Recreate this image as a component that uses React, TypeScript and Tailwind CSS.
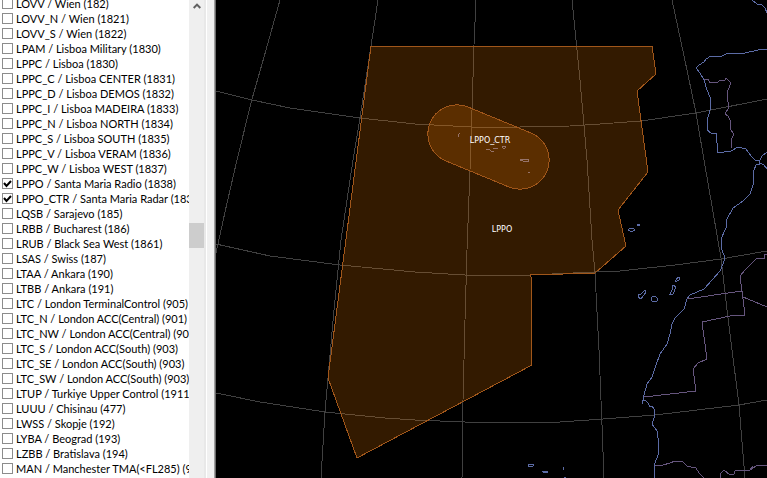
import React, { useState } from "react";

interface Sector {
  label: string;
  active?: boolean;
}

const sectors: Sector[] = [
  { label: "LOVV / Wien (182)" },
  { label: "LOVV_N / Wien (1821)" },
  { label: "LOVV_S / Wien (1822)" },
  { label: "LPAM / Lisboa Military (1830)" },
  { label: "LPPC / Lisboa (1830)" },
  { label: "LPPC_C / Lisboa CENTER (1831)" },
  { label: "LPPC_D / Lisboa DEMOS (1832)" },
  { label: "LPPC_I / Lisboa MADEIRA (1833)" },
  { label: "LPPC_N / Lisboa NORTH (1834)" },
  { label: "LPPC_S / Lisboa SOUTH (1835)" },
  { label: "LPPC_V / Lisboa VERAM (1836)" },
  { label: "LPPC_W / Lisboa WEST (1837)" },
  { label: "LPPO / Santa Maria Radio (1838)", active: true },
  { label: "LPPO_CTR / Santa Maria Radar (1838)", active: true },
  { label: "LQSB / Sarajevo (185)" },
  { label: "LRBB / Bucharest (186)" },
  { label: "LRUB / Black Sea West (1861)" },
  { label: "LSAS / Swiss (187)" },
  { label: "LTAA / Ankara (190)" },
  { label: "LTBB / Ankara (191)" },
  { label: "LTC / London TerminalControl (905)" },
  { label: "LTC_N / London ACC(Central) (901)" },
  { label: "LTC_NW / London ACC(Central) (901)" },
  { label: "LTC_S / London ACC(South) (903)" },
  { label: "LTC_SE / London ACC(South) (903)" },
  { label: "LTC_SW / London ACC(South) (903)" },
  { label: "LTUP / Turkiye Upper Control (1911)" },
  { label: "LUUU / Chisinau (477)" },
  { label: "LWSS / Skopje (192)" },
  { label: "LYBA / Beograd (193)" },
  { label: "LZBB / Bratislava (194)" },
  { label: "MAN / Manchester TMA(<FL285) (905)" },
];

const gridLines = [
  "280,0 266,50 252,99 237,160 225,212 216,253",
  "378,0 371,46 360,118 353,160 341,240 334,310 328,378 325,412 321,478",
  "476,0 474,45 472,110 470,170 467,250 465,320 463,400 462,478",
  "572,0 580,80 587,160 592,240 595,273 599,350 602,425 604,478",
  "672,0 684,56 696,113 704,160 721,258 728,318 739,405 745,478",
  "216,91 252,100 290,108 360,118 415,124 472,127 520,127 570,126 600,124 641,121 696,113 767,99",
  "216,244 270,256 340,265 415,272 465,275 530,275 595,272 620,271 675,265 721,259 767,251",
  "216,393 260,402 325,412 385,418 415,420 465,422 560,422 603,419 655,415 739,405 767,400",
];

const coastLines = [
  "752,0 757,4 762,5 765,8 767,13",
  "767,49 758,50 745,53 728,53 722,56 711,56 706,59 704,62 699,65 696,68 700,73 704,80 707,90 710,97 710,110 707,121 707,130 711,133 716,133 718,153 731,151 738,147 746,149 752,157 755,160 759,161 760,164 756,165 754,170 753,185 750,194 743,201 733,208 727,219 726,228 721,239 722,250 725,258 723,264 720,271 712,280 704,289 690,295 687,299 684,309 675,318 672,324 670,334 667,344 660,354 655,368 652,377 647,384 644,395 643,400 642,404",
  "759,162 762,156 767,152",
  "760,163 764,165 767,169",
  "643,401 645,400 648,403 650,407 652,406 654,409 654,418 652,424 657,431 659,444 658,455 655,463 654,472 655,478",
  // Canarias
  "638,295 641,294 645,290 646,292 641,299 638,297 638,295",
  "652,297 655,296 657,298 657,301 653,302 651,300 652,297",
  "673,285 676,287 673,294 670,294 672,290 673,285",
  "675,282 678,277 680,277 679,280 675,282",
  // Madeira
  "628,230 630,228 633,228 635,230 633,231 630,231 628,230",
  "637,224 639,224 639,225 637,225",
  // Cabo Verde
  "528,464 534,464 533,466 529,467 528,464",
  "542,471 548,472 543,472",
  "563,467 563,470",
  "564,477 566,477",
  // Azores
  "460,133 458,135 459,137",
  "486,149 489,149 491,151 494,151",
  "493,149 498,148",
  "502,147 504,146 506,147 504,149 502,147",
  "493,142 495,142",
  "520,160 523,159 528,159 528,161 523,161 520,160",
  "528,172 530,172",
];

const borderLines = [
  "704,80 708,79 710,83 718,82 720,80 725,80 726,78 731,83 728,90 727,97 729,107 725,114 728,116 731,122 730,129 734,134 731,140 731,148",
  "687,299 742,291",
  "767,254 764,254 764,258 757,258 746,269 740,276 742,291 745,315 730,316 702,322 707,359 698,363 693,369 696,391 644,397",
  "743,297 755,302 767,307",
  "655,465 663,465 670,463 675,461 683,462 687,466 691,467 696,468 699,473 704,478",
  "720,478 720,474 724,470 730,475 734,474 735,471 750,470 753,466 752,469 756,466 767,465",
];

const SectorRow: React.FC<{ sector: Sector }> = ({ sector }) => {
  const [checked, setChecked] = useState(!!sector.active);

  return (
    <label className="flex h-[15px] items-center gap-[3px] pl-0.5 whitespace-nowrap">
      <span className="relative size-[11px] shrink-0">
        <input
          type="checkbox"
          checked={checked}
          onChange={() => setChecked(!checked)}
          className="block size-[11px] appearance-none border border-[#8c8c8c] bg-white"
        />
        {checked && (
          <svg viewBox="0 0 11 11" className="pointer-events-none absolute inset-0 size-[11px]">
            <path d="M2 5 L4.5 8 L9 3" fill="none" stroke="#000" strokeWidth="2" />
          </svg>
        )}
      </span>
      <span>{sector.label}</span>
    </label>
  );
};

const SectorList = () => (
  <aside className="flex w-[216px] shrink-0 border-r border-[#696969] bg-[#f0f0f0]">
    <div className="-mt-1 min-w-0 flex-1 overflow-hidden bg-white font-['Lato','Liberation_Sans',sans-serif] text-[11px] leading-[15px] text-black">
      {sectors.map((sector) => (
        <SectorRow key={sector.label} sector={sector} />
      ))}
    </div>

    {/* Scrollbar */}
    <div className="flex w-[15px] flex-col bg-[#efefef]">
      <button aria-label="Scroll up" className="flex h-3 w-full items-center justify-center">
        <svg viewBox="0 0 8 6" className="h-1.5 w-2">
          <path d="M0.7 5 L4 1.6 L7.3 5" fill="none" stroke="#606060" strokeWidth="2" />
        </svg>
      </button>
      <div className="flex-[211]"></div>
      <div className="h-[25px] bg-[#cdcdcd]"></div>
      <div className="flex-[230]"></div>
    </div>

    {/* Panel edge */}
    <div className="w-[3px] border-r border-white bg-[#e8e8e8]"></div>
    <div className="w-2 border-r border-[#a0a0a0] bg-[#f0f0f0]"></div>
  </aside>
);

const SectorMap = () => (
  <main className="min-w-0 flex-1 bg-black">
    <svg
      viewBox="216 0 551 478"
      preserveAspectRatio="xMinYMin slice"
      className="block h-full w-full"
      fill="none"
    >
      <g stroke="#404040" shapeRendering="crispEdges">
        {gridLines.map((points) => (
          <polyline key={points} points={points} />
        ))}
      </g>
      <g stroke="#5c6ca6" shapeRendering="crispEdges">
        {coastLines.map((points) => (
          <polyline key={points} points={points} />
        ))}
      </g>
      <g stroke="#66567e" shapeRendering="crispEdges">
        {borderLines.map((points) => (
          <polyline key={points} points={points} />
        ))}
      </g>
      <g fill="#ff8000" fillOpacity="0.2" stroke="#a0561a" shapeRendering="crispEdges">
        <path d="M371 46 H652 L656 74 L637 91 L648 172 L618 210 L626 246 L595 273 L531 275 L532 365 L357 458 L328 378 Z" />
        <path d="M468 107 L531 133 A29 29 0 0 1 509 187 L446 161 A29 29 0 0 1 468 107 Z" />
      </g>
      <g fill="#fff" fontSize="8" textAnchor="middle" className="font-['DejaVu_Sans',sans-serif]">
        <text x="490" y="143">LPPO_CTR</text>
        <text x="502" y="232">LPPO</text>
      </g>
    </svg>
  </main>
);

const App = () => (
  <div className="flex h-screen overflow-hidden">
    <SectorList />
    <SectorMap />
  </div>
);

export default App;
